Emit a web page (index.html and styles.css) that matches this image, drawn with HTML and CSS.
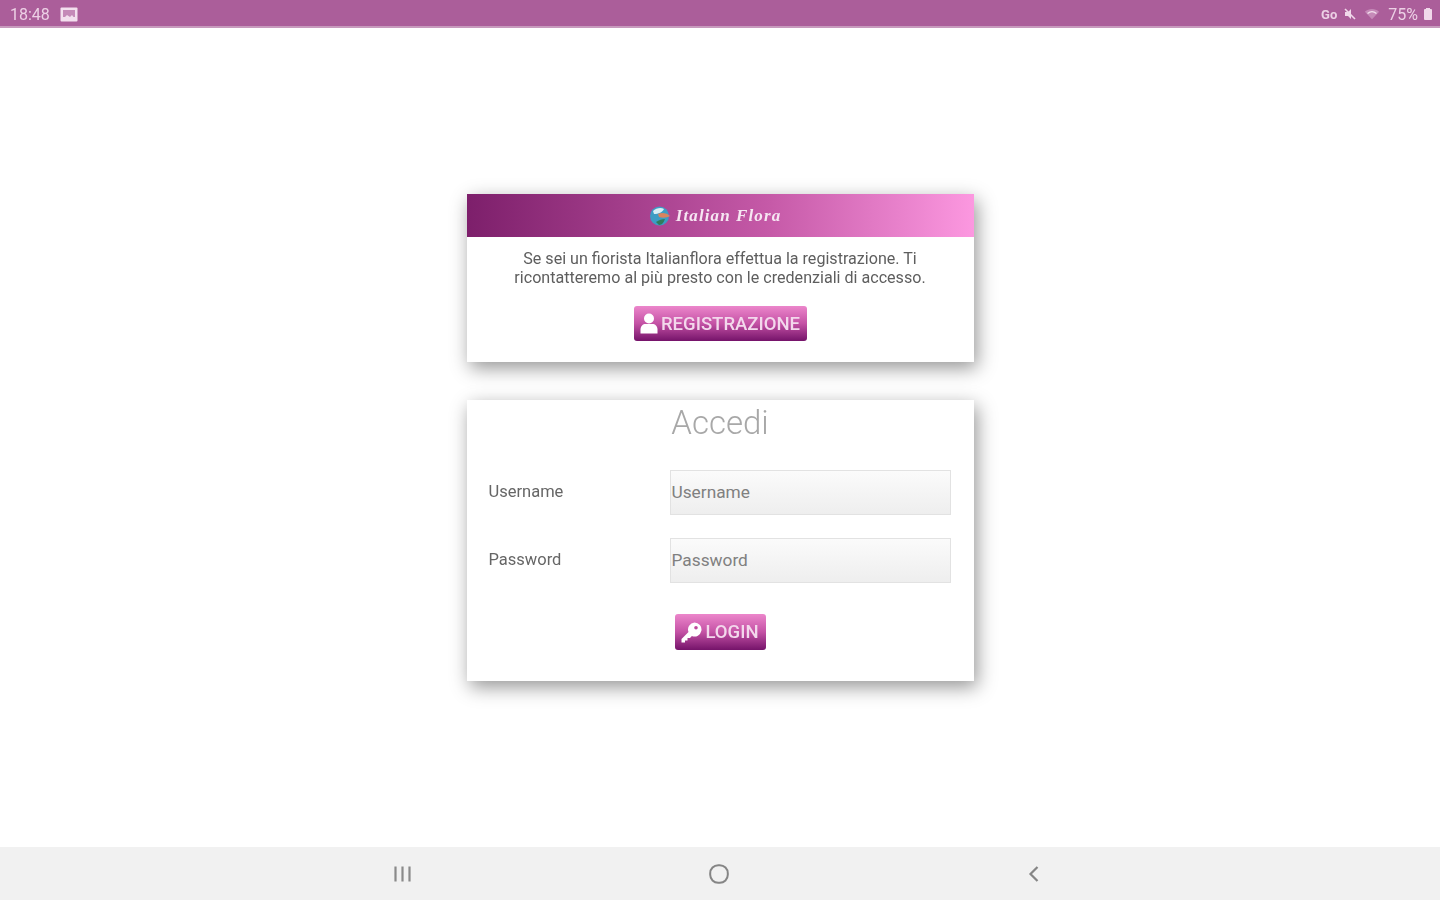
FILE: index.html
```html
<!DOCTYPE html>
<html lang="en">
<head>
    <meta charset="UTF-8">
    <title>Italian Flora</title>
    <link rel="stylesheet" href="styles.css">
</head>
<body>
<div id="container">
    <div id="status_bar">
        <div class="status_side">
            <span class="status_time">18:48</span>
            <svg class="status_pic" width="18" height="15" viewBox="0 0 18 15">
                <rect x="0.5" y="0.5" width="17" height="14" rx="1" fill="#f3dfee"/>
                <rect x="3" y="3" width="12" height="7" fill="#c58ab8"/>
                <path d="M3 12l4-4 3 2 2-2 3 4z" fill="#f3dfee"/>
            </svg>
        </div>
        <div class="status_side status_right">
            <span class="status_small">Go</span>
            <svg width="14" height="14" viewBox="0 0 14 14">
                <path d="M2 5h3l3-3v10l-3-3H2z" fill="#f0d8ea"/>
                <path d="M2 2l10 10" stroke="#f0d8ea" stroke-width="1.6"/>
            </svg>
            <svg class="status_wifi" width="16" height="14" viewBox="0 0 18 14">
                <path d="M1 4.500C5.500 0.500 12.500 0.500 17 4.500L9 13z" fill="#c58ab8"/>
                <path d="M4 6.500C7 4 11 4 14 6.500" stroke="#f3dfee" stroke-width="1.400" fill="none"/>
            </svg>
            <span class="status_pct">75%</span>
            <svg width="8" height="12" viewBox="0 0 8 12">
                <rect x="0" y="1" width="8" height="11" rx="1" fill="#f0d8ea"/>
                <rect x="2" y="0" width="4" height="1" fill="#f0d8ea"/>
            </svg>
        </div>
    </div>

    <div id="content">
        <div class="card">
            <div class="card_head">
                <svg class="logo" width="22" height="22" viewBox="0 0 22 22">
                    <circle cx="10.500" cy="11" r="9.500" fill="#3d9cc4"/>
                    <path d="M4 6c3-3 8-4 11-2-1 3-6 5-10 5z" fill="#d8eef5"/>
                    <path d="M9 9c4-2 9-1 12 2-3 2-8 2-11 1z" fill="#d9835f"/>
                    <path d="M7 17c3-2 6-3 9-3-1 3-3 6-6 6z" fill="#2e7d5b"/>
                </svg>
                <span class="brand">Italian Flora</span>
            </div>
            <p class="card_text">Se sei un fiorista Italianflora effettua la registrazione. Ti<br>ricontatteremo al più presto con le credenziali di accesso.</p>
            <div class="btn_row reg_row">
                <button class="btn reg_btn">
                    <svg width="18" height="21" viewBox="0 0 18 21">
                        <circle cx="9" cy="5.500" r="5" fill="#fff"/>
                        <path d="M0.500 20.500v-4c0-3.500 2.500-5.500 5-5.500h7c2.500 0 5 2 5 5.500v4z" fill="#fff"/>
                    </svg>
                    <span class="btn_text">REGISTRAZIONE</span>
                </button>
            </div>
        </div>

        <div class="card login_card">
            <h1 class="login_title">Accedi</h1>
            <div class="form_grid">
                <label class="form_label" for="username">Username</label>
                <input class="form_input" id="username" placeholder="Username">
                <label class="form_label" for="password">Password</label>
                <input class="form_input" id="password" placeholder="Password">
            </div>
            <div class="btn_row login_row">
                <button class="btn login_btn">
                    <svg width="21" height="21" viewBox="0 0 21 21">
                        <path d="M13.500 0.500a7 7 0 1 1-2.600 13.500l-1.900 2h-2.500v2.500h-2.500v2H0.500v-3.500l7-7a7 7 0 0 1 6-9.500z" fill="#fff"/>
                        <circle cx="15" cy="5.800" r="1.800" fill="#bd4a9c"/>
                    </svg>
                    <span class="btn_text">LOGIN</span>
                </button>
            </div>
        </div>
    </div>

    <div id="nav_bar">
        <svg width="20" height="16" viewBox="0 0 20 16">
            <path d="M2.500 0.500v15M9.500 0.500v15M16.500 0.500v15" stroke="#8a8a8a" stroke-width="2.200" fill="none"/>
        </svg>
        <svg width="20" height="20" viewBox="0 0 20 20">
            <rect x="1.200" y="1.200" width="17.600" height="17.600" rx="8" stroke="#858585" stroke-width="2" fill="none"/>
        </svg>
        <svg width="12" height="16" viewBox="0 0 12 16">
            <path d="M9.500 1L2.500 8l7 7" stroke="#858585" stroke-width="2.200" fill="none"/>
        </svg>
    </div>
</div>
</body>
</html>
```

FILE: styles.css
```css
body{
    margin: 0;
    background-color: #fff;
    font-family: Roboto, "Liberation Sans", sans-serif;
}
#container{
    display: flex;
    flex-direction: column;
    width: 100%;
    height: 100vh;
    overflow: hidden;
}
#status_bar{
    height: 28px;
    flex-shrink: 0;
    display: flex;
    justify-content: space-between;
    align-items: center;
    padding: 2px 8px 0 10px;
    box-sizing: border-box;
    background-color: #ab5e9a;
    color: #ecd0e5;
    border-bottom: 2px solid #c79abd;
}
.status_side{
    display: flex;
    align-items: center;
    filter: blur(0.6px);
}
.status_time{
    font-size: 16px;
    width: 50px;
}
.status_right{
    gap: 6px;
}
.status_small{
    font-size: 13px;
    font-weight: bold;
}
.status_wifi{
    margin-left: 1px;
}
.status_pct{
    font-size: 16px;
    margin-left: 2px;
}
#content{
    flex: 1;
    display: flex;
    flex-direction: column;
    align-items: center;
    gap: 38px;
    padding-top: 166px;
}
.card{
    width: 507px;
    background-color: #fff;
    box-shadow: 3px 6px 18px rgba(0,0,0,0.42);
}
.card_head{
    height: 43px;
    display: flex;
    align-items: center;
    justify-content: center;
    gap: 5px;
    padding-right: 10px;
    background: linear-gradient(to right, #7d1f6b, #c65aa8 60%, #fc98e0);
}
.logo, .brand{
    filter: blur(0.6px);
}
.brand{
    font-family: "Liberation Serif", serif;
    font-style: italic;
    font-weight: bold;
    font-size: 17px;
    letter-spacing: 1.1px;
    color: #f6e6f2;
}
.card_text{
    margin: 12px 0 0;
    text-align: center;
    font-size: 16.100px;
    line-height: 19px;
    color: #5e5e5e;
    filter: blur(0.6px);
}
.btn_row{
    display: flex;
    justify-content: center;
}
.reg_row{
    margin-top: 19px;
    padding-bottom: 21px;
}
.btn{
    display: flex;
    align-items: center;
    justify-content: center;
    gap: 3px;
    height: 36px;
    padding: 0;
    border: none;
    border-radius: 3px;
    background: linear-gradient(to bottom, #ec86cb, #c452a5 50%, #75136a);
    font-family: Roboto, "Liberation Sans", sans-serif;
    font-size: 18.500px;
    font-weight: 500;
    color: #f3d8ec;
}
.btn svg, .btn_text{
    filter: blur(0.6px);
}
.reg_btn{
    width: 173px;
    height: 35px;
}
.login_btn{
    width: 91px;
}
.login_card{
    height: 281px;
}
.login_title{
    margin: 0;
    padding-top: 4px;
    text-align: center;
    font-size: 33px;
    line-height: 37px;
    font-weight: 300;
    color: #a8a8a8;
    filter: blur(0.6px);
}
.form_grid{
    display: grid;
    grid-template-columns: 181px 281px;
    grid-auto-rows: 45px;
    row-gap: 23px;
    align-items: center;
    margin-top: 29px;
    padding-left: 22px;
}
.form_label{
    font-size: 16.500px;
    color: #666;
    padding-bottom: 3px;
    filter: blur(0.6px);
}
.form_input{
    width: 100%;
    height: 45px;
    box-sizing: border-box;
    padding: 0 0 2px 1px;
    border: 1px solid #e2e2e2;
    background: linear-gradient(to bottom, #fbfbfb, #eeeeee);
    font-family: Roboto, "Liberation Sans", sans-serif;
    font-size: 17.300px;
}
.form_input::placeholder{
    color: #808080;
    opacity: 1;
}
.login_row{
    margin-top: 31px;
}
#nav_bar{
    height: 53px;
    flex-shrink: 0;
    display: grid;
    grid-template-columns: 315.500px 315.500px 315.500px;
    justify-content: center;
    justify-items: center;
    align-items: center;
    padding-right: 3px;
    background-color: #f1f1f1;
}
#nav_bar svg{
    display: block;
    filter: blur(0.6px);
}
```
